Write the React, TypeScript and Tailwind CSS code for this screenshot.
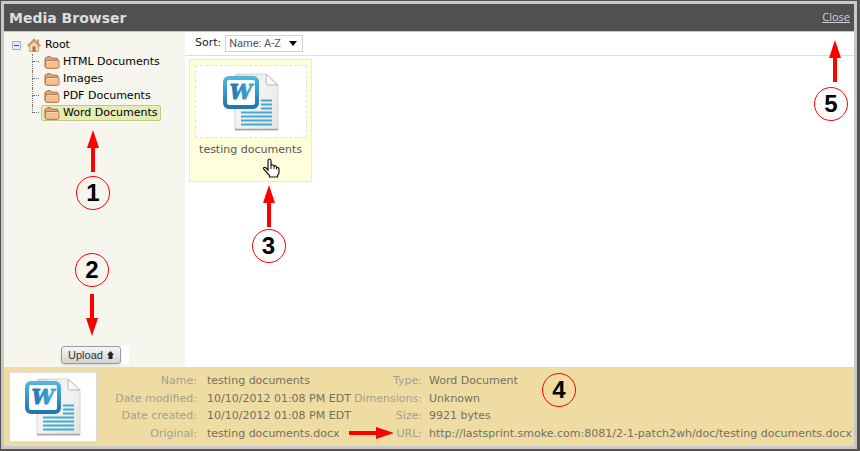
import type { ReactNode } from "react";

function DocIcon() {
  return (
    <svg width="56" height="58" viewBox="0 0 56 58" aria-hidden="true">
      <defs>
        <linearGradient id="page" x1="0" y1="0" x2="1" y2="1">
          <stop offset="0" stopColor="#d6d6d6" />
          <stop offset="0.4" stopColor="#f4f4f4" />
          <stop offset="1" stopColor="#e4e4e4" />
        </linearGradient>
        <linearGradient id="frame" x1="0" y1="0" x2="0" y2="1">
          <stop offset="0" stopColor="#4fb6dc" />
          <stop offset="1" stopColor="#1f77b4" />
        </linearGradient>
        <linearGradient id="letter" x1="0" y1="0" x2="1" y2="0">
          <stop offset="0" stopColor="#1f6fb2" />
          <stop offset="1" stopColor="#4fb4da" />
        </linearGradient>
      </defs>
      <path d="M14 1H43L55 12V57H12V3Q12 1 14 1Z" fill="url(#page)" stroke="#d6d6d6" />
      <path d="M12 56.500H55" stroke="#a4a4a4" strokeWidth="1.600" />
      <path d="M43 1V10Q43 12 45 12H55Z" fill="#fafafa" stroke="#b5b5b5" />
      <path
        d="M38 27.500H49M38 31.500H49M38 35.500H49M18 39.500H49M18 43.500H49M18 47.500H49M18 51.500H49"
        stroke="#43abd0"
        strokeWidth="1.800"
      />
      <rect x="2" y="5" width="32" height="29" rx="4" fill="#fff" stroke="url(#frame)" strokeWidth="4" />
      <text
        x="18"
        y="26"
        textAnchor="middle"
        fill="url(#letter)"
        stroke="url(#letter)"
        strokeWidth="1"
        className="font-['DejaVu_Serif',serif] text-[20px] font-bold italic"
      >
        W
      </text>
    </svg>
  );
}

function FolderIcon() {
  return (
    <svg width="16" height="13" viewBox="0 0 16 13" aria-hidden="true">
      <path d="M1 4V3Q1 1.500 2.500 1.500L3.500 .7H6.500L8 2.200H12.500Q14 2.200 14 3.700V10Q14 12 12.500 12H3Q1 12 1 10Z" fill="#dfa676" stroke="#9c6c48" />
      <path d="M1.500 6Q1.500 4.500 3 4.500H13.700Q15 4.500 15 6V10.500Q15 12.300 13.500 12.300H3Q1.500 12.300 1.500 10.500Z" fill="#f6bf90" stroke="#a87650" strokeWidth=".9" />
      <path d="M3 5.500H13.500" stroke="#fddcba" strokeWidth=".8" />
    </svg>
  );
}

function HomeIcon() {
  return (
    <svg width="14" height="14" viewBox="0 0 14 14" aria-hidden="true">
      <path d="M2.500 7V13.500H11.500V7L7 3Z" fill="#f8d6ae" stroke="#c39468" strokeWidth=".8" />
      <path d="M10 1.500H12V5H10Z" fill="#c9946a" />
      <path d="M.8 8.200L7 2L13.200 8.200" fill="none" stroke="#d09a6c" strokeWidth="2.600" />
      <path d="M5.500 8.500H8.500V13.500H5.500Z" fill="#a86f43" />
    </svg>
  );
}

function HandIcon() {
  return (
    <svg width="18" height="20" viewBox="0 0 18 20" aria-hidden="true">
      <path
        d="M6 12V3Q6 1 7.500 1T9 3V8Q9 6.500 10.500 6.800Q12 7 12 8.500Q12.300 7.300 13.500 7.800Q14.600 8 14.600 9.500Q15 9 16 9.500Q17 10 17 11V14Q17 16 15.500 17.500V19H7.500V17.500L2 11.500Q1 10 2 9.500Q3.500 9 4.500 10.500Z"
        fill="#fff"
        stroke="#111"
        strokeWidth="1.200"
      />
      <path d="M9 8V11M12 8.500V11M14.600 9.500V11.500" stroke="#111" />
    </svg>
  );
}

function Arrow({ turn = "" }: { turn?: string }) {
  return (
    <svg className={`shrink-0 fill-[#ff0000] ${turn}`} width="12" height="42" viewBox="0 0 12 42" aria-hidden="true">
      <path d="M6 0L12 18H8V42H4V18H0Z" />
    </svg>
  );
}

function Badge({ children }: { children: ReactNode }) {
  return (
    <span className="flex size-[34px] shrink-0 items-center justify-center rounded-full border border-[#ff0000] font-['Liberation_Sans',Arial,sans-serif] text-2xl font-bold text-black">
      {children}
    </span>
  );
}

const folders = ["HTML Documents", "Images", "PDF Documents", "Word Documents"];

function Sidebar() {
  return (
    <aside className="flex w-[181px] shrink-0 flex-col items-start bg-[#f7f6ee] pt-1 pb-[3px] pl-2 text-black">
      <div className="flex h-[18px] items-center">
        <button
          aria-label="Collapse Root"
          className="flex size-[9px] items-center justify-center rounded-[1px] border border-[#8faecb] bg-[#e4edf5]"
        >
          <span className="h-px w-[5px] bg-[#31516e]" />
        </button>
        <span className="ml-1.5 flex">
          <HomeIcon />
        </span>
        <span className="ml-1">Root</span>
      </div>
      <ul className="pl-5">
        {folders.map((name, i) => {
          const last = i === folders.length - 1;
          return (
            <li key={name} className="flex h-[17px]">
              <span className="flex w-[9px] flex-col">
                <span className="flex h-2 border-l border-dotted border-[#777]">
                  <span className="w-1.5 border-b border-dotted border-[#777]" />
                </span>
                {!last && <span className="flex-1 border-l border-dotted border-[#777]" />}
              </span>
              <button
                className={`flex h-4 items-center rounded-[2px] border px-0.5 ${
                  last ? "border-[#bcc987] bg-[#e5edb5]" : "border-transparent"
                }`}
              >
                <FolderIcon />
                <span className="ml-[3px]">{name}</span>
              </button>
            </li>
          );
        })}
      </ul>
      <div className="mt-2 ml-16 flex flex-col items-center gap-1">
        <Arrow />
        <Badge>1</Badge>
      </div>
      <div className="mt-[43px] ml-[63px] flex flex-col items-center gap-[7px]">
        <Badge>2</Badge>
        <Arrow turn="rotate-180" />
      </div>
      <div className="mt-auto ml-[49px] bg-white pr-2">
        <button className="flex h-[18px] w-[60px] items-center justify-center gap-1 rounded-[3px] border border-[#999] bg-linear-to-b from-[#f5f5f5] to-[#d4d4d4] font-['Liberation_Sans',Arial,sans-serif] text-[11px] text-[#333] shadow-sm">
          Upload
          <svg width="7" height="8" viewBox="0 0 7 8" aria-hidden="true">
            <path d="M3.500 0L7 4H5.500V8H1.500V4H0Z" fill="#222" />
          </svg>
        </button>
      </div>
    </aside>
  );
}

function Listing() {
  return (
    <main className="relative min-w-0 flex-1 bg-white">
      <div className="flex h-6 items-center gap-1 border-b border-[#dedede] pl-[10px]">
        <label htmlFor="sort" className="text-[#222]">
          Sort:
        </label>
        <span className="relative flex">
          <select
            id="sort"
            className="h-[17px] w-[78px] appearance-none border border-[#ccd5d9] bg-white pl-[3px] font-[Roboto,Tahoma,sans-serif] text-[11px] leading-[15px] text-[#555]"
          >
            <option>Name: A-Z</option>
          </select>
          <svg className="pointer-events-none absolute top-1.5 right-1.5" width="8" height="5" viewBox="0 0 8 5" aria-hidden="true">
            <path d="M0 0H8L4 5Z" fill="#000" />
          </svg>
        </span>
      </div>
      <div className="ml-1 flex w-[123px] flex-col items-center pt-[3px]">
        <button className="flex h-[123px] w-full flex-col items-center border border-[#e9eec0] bg-[#ffffdc] pt-[5px] text-[#555]">
          <span className="flex h-[73px] w-[112px] items-center justify-center border border-dashed border-[#e2e2e2] bg-white">
            <DocIcon />
          </span>
          <span className="mt-1 leading-4">testing documents</span>
          <span className="ml-10">
            <HandIcon />
          </span>
        </button>
        <div className="mt-[3px] ml-9 flex flex-col items-center gap-0.5">
          <Arrow />
          <Badge>3</Badge>
        </div>
      </div>
      <div className="absolute top-2 right-[6px] flex flex-col items-end gap-[5px]">
        <span className="pr-[7px]">
          <Arrow />
        </span>
        <Badge>5</Badge>
      </div>
    </main>
  );
}

function Detail({ label, value }: { label: string; value: string }) {
  return (
    <>
      <dt className="text-right text-[#a39f8e]">{label}:</dt>
      <dd className="text-[#75705f]">{value}</dd>
    </>
  );
}

function Details() {
  return (
    <footer className="relative flex bg-[#eedca3] pt-[5px] pb-1 pl-[5px] leading-[17px] whitespace-nowrap">
      <span className="flex h-[70px] w-[88px] shrink-0 items-center justify-center border border-[#ddd] bg-white">
        <DocIcon />
      </span>
      <dl className="grid w-[245px] shrink-0 grid-cols-[100px_auto] gap-x-[10px]">
        <Detail label="Name" value="testing documents" />
        <Detail label="Date modified" value="10/10/2012 01:08 PM EDT" />
        <Detail label="Date created" value="10/10/2012 01:08 PM EDT" />
        <Detail label="Original" value="testing documents.docx" />
      </dl>
      <dl className="grid grid-cols-[80px_auto] gap-x-[7px]">
        <Detail label="Type" value="Word Document" />
        <Detail label="Dimensions" value="Unknown" />
        <Detail label="Size" value="9921 bytes" />
        <Detail label="URL" value="http://lastsprint.smoke.com:8081/2-1-patch2wh/doc/testing documents.docx" />
      </dl>
      <span className="absolute top-1.5 left-[538px]">
        <Badge>4</Badge>
      </span>
      <svg className="absolute top-[60px] left-[345px] fill-[#ff0000]" width="45" height="12" viewBox="0 0 45 12" aria-hidden="true">
        <path d="M45 6L27 12V8H0V4H27V0Z" />
      </svg>
    </footer>
  );
}

export default function App() {
  return (
    <div className="flex min-h-screen flex-col border-t border-r-3 border-b-2 border-l border-[#555250] bg-[#c9c9cb] p-[3px] font-['DejaVu_Sans',Verdana,sans-serif] text-[11px]">
      <header className="flex h-7 items-center justify-between border-b border-[#c9c9cb] bg-[#505050] pr-1 pl-[5px]">
        <h1 className="text-sm font-bold text-[#dddddd]">Media Browser</h1>
        <a href="#close" className="font-['Open_Sans',Tahoma,sans-serif] text-[#d0d0d0] underline">
          Close
        </a>
      </header>
      <div className="flex flex-1">
        <Sidebar />
        <Listing />
      </div>
      <Details />
    </div>
  );
}
